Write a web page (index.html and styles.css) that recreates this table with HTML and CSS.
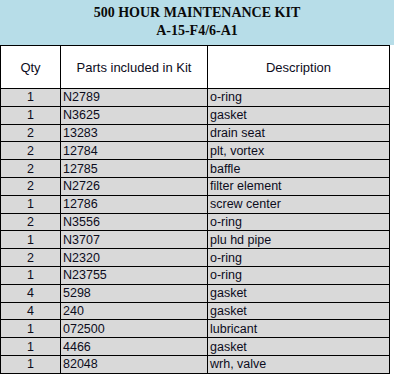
FILE: index.html
```html
<!DOCTYPE html>
<html>
<head>
<meta charset="utf-8">
<link rel="stylesheet" href="styles.css">
</head>
<body>
<div class="title">
  <div>500 HOUR MAINTENANCE KIT</div>
  <div>A-15-F4/6-A1</div>
</div>
<table class="kit">
  <colgroup>
    <col class="c-qty"><col class="c-part"><col class="c-desc">
  </colgroup>
  <thead>
    <tr><th>Qty</th><th>Parts included in Kit</th><th>Description</th></tr>
  </thead>
  <tbody>
    <tr><td class="q">1</td><td>N2789</td><td>o-ring</td></tr>
    <tr><td class="q">1</td><td>N3625</td><td>gasket</td></tr>
    <tr><td class="q">2</td><td>13283</td><td>drain seat</td></tr>
    <tr><td class="q">2</td><td>12784</td><td>plt, vortex</td></tr>
    <tr><td class="q">2</td><td>12785</td><td>baffle</td></tr>
    <tr><td class="q">2</td><td>N2726</td><td>filter element</td></tr>
    <tr><td class="q">1</td><td>12786</td><td>screw center</td></tr>
    <tr><td class="q">2</td><td>N3556</td><td>o-ring</td></tr>
    <tr><td class="q">1</td><td>N3707</td><td>plu hd pipe</td></tr>
    <tr><td class="q">2</td><td>N2320</td><td>o-ring</td></tr>
    <tr><td class="q">1</td><td>N23755</td><td>o-ring</td></tr>
    <tr><td class="q">4</td><td>5298</td><td>gasket</td></tr>
    <tr><td class="q">4</td><td>240</td><td>gasket</td></tr>
    <tr><td class="q">1</td><td>072500</td><td>lubricant</td></tr>
    <tr><td class="q">1</td><td>4466</td><td>gasket</td></tr>
    <tr><td class="q">1</td><td>82048</td><td>wrh, valve</td></tr>
  </tbody>
</table>
</body>
</html>
```
FILE: styles.css
```css
html, body {
  margin: 0;
  padding: 0;
  background: #ffffff;
}
body {
  width: 394px;
  height: 376px;
  overflow: hidden;
}
.title {
  background: #b7dde8;
  height: 45px;
  box-sizing: border-box;
  padding-top: 4px;
  text-align: center;
  font-family: "Liberation Serif", "Times New Roman", serif;
  font-weight: bold;
  font-size: 14px;
  line-height: 18px;
  color: #0a0a0a;
}
.kit {
  border-collapse: collapse;
  table-layout: fixed;
  width: 389px;
  margin-left: 0;
  font-family: "Liberation Sans", Arial, sans-serif;
  font-size: 12.5px;
  color: #0c0c1c;
}
.c-qty { width: 60px; }
.c-part { width: 147px; }
.c-desc { width: 182px; }
.kit th, .kit td {
  border: 1px solid #000000;
  padding: 0 0 0 2px;
  white-space: nowrap;
  overflow: hidden;
}
.kit th {
  height: 42px;
  background: #ffffff;
  font-weight: normal;
  font-size: 13px;
  text-align: center;
  padding: 0;
}
.kit td {
  height: 16.8px;
  line-height: 14px;
  background: #d9d9d9;
  text-align: left;
}
.kit td.q {
  text-align: center;
  padding: 0;
}
```
